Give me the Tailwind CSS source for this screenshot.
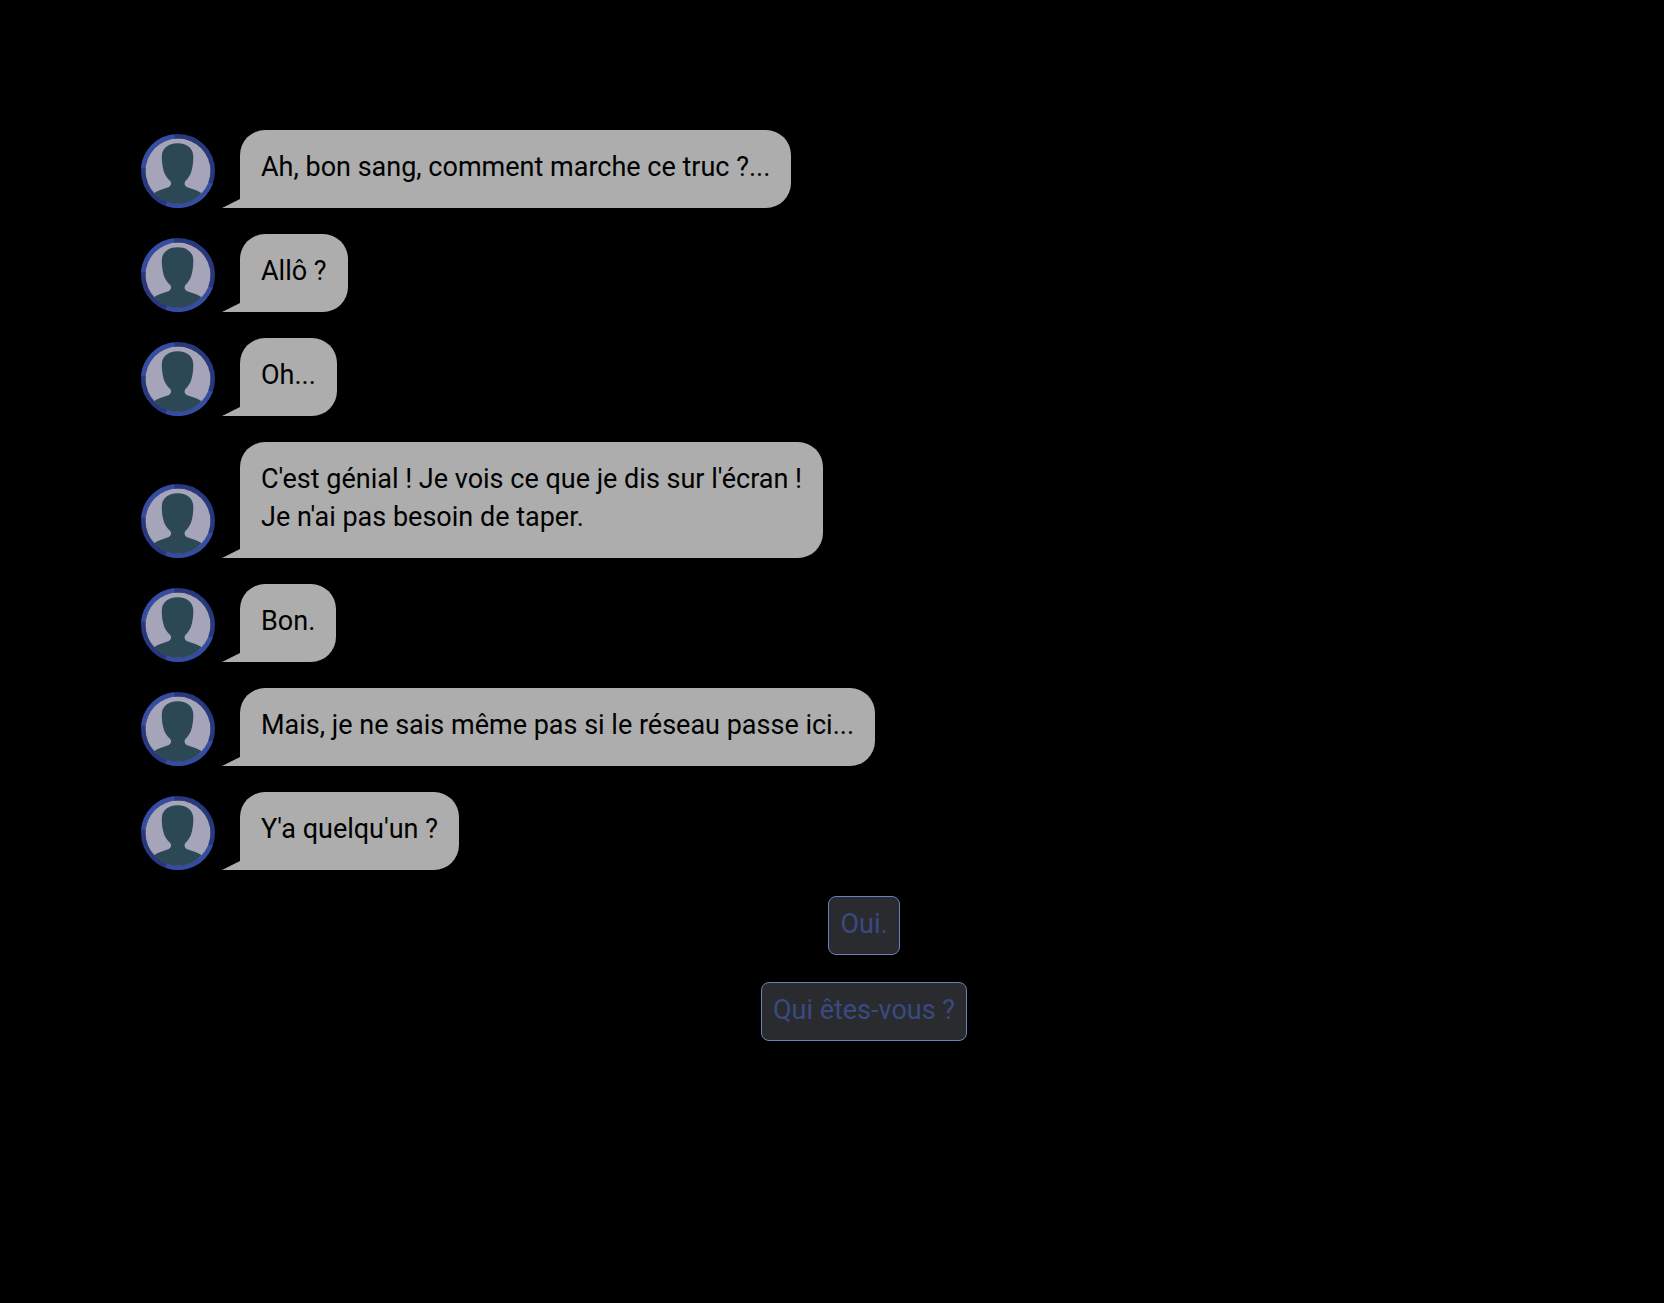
<!DOCTYPE html>
<html lang="fr">
<head>
    <meta charset="UTF-8">
    <meta name="viewport" content="width=device-width, initial-scale=1.0">
    <title>Conversation</title>
    <script src="https://cdn.jsdelivr.net/npm/@tailwindcss/browser@4"></script>
</head>
<body class="min-h-screen bg-black text-black text-[27px] leading-[38px] font-[Roboto,sans-serif]">

    <!-- Shared drawings -->
    <svg class="hidden" aria-hidden="true">
        <symbol id="avatar" viewBox="0 0 74 74">
            <circle cx="37" cy="37" r="34.7" fill="none" stroke="#27387f" stroke-width="4.6"/>
            <path d="M2.4 34A34.7 34.7 0 0 1 33.4 2.5M69.6 48.9A34.7 34.7 0 0 1 25.1 69.6" fill="none" stroke="#354ca3" stroke-width="4.6"/>
            <circle cx="37" cy="37" r="32.5" fill="#a5a4b8"/>
            <path d="M36.600 9.300C46.500 9.300 52.300 14.800 52.300 22.500C52.300 28 51.800 32.500 50.500 37C49.300 41.300 47.200 44.300 44.300 47C43.100 49 43.300 51.500 45.800 53C51.300 55.300 56.300 56 60.700 59.200A32.500 32.500 0 0 1 12.900 59.200C17.300 56 22.300 55.300 27.800 53C30.300 51.500 30.500 49 29.300 47C26.200 44.300 23.900 41.300 22.700 37C21.400 32.500 20.800 28 20.800 22.500C20.800 14.800 26.700 9.300 36.600 9.300Z" fill="#2c4855"/>
        </symbol>
        <symbol id="tail" viewBox="0 0 18 9">
            <path d="M18 0V9H0Z" fill="#adadad"/>
        </symbol>
    </svg>

    <main class="flex flex-col gap-[26px] pt-[130px] pr-[77px] pb-16 pl-[141px]">
        <ul id="messages" class="flex flex-col gap-[26px]"></ul>

        <!-- Possible answers -->
        <div id="choices" class="flex flex-col items-center gap-[27px]">
            <button type="button" class="rounded-lg border border-[#6a80bb] bg-[#2a2b2e] px-[11px] pt-2 pb-[11px] text-[#3a4a80] cursor-pointer">Oui.</button>
            <button type="button" class="rounded-lg border border-[#6a80bb] bg-[#2a2b2e] px-[11px] pt-2 pb-[11px] text-[#3a4a80] cursor-pointer">Qui êtes-vous ?</button>
        </div>
    </main>

<script>
    const messages = [
        "Ah, bon sang, comment marche ce truc ?...",
        "Allô ?",
        "Oh...",
        "C'est génial ! Je vois ce que je dis sur l'écran !<br>Je n'ai pas besoin de taper.",
        "Bon.",
        "Mais, je ne sais même pas si le réseau passe ici...",
        "Y'a quelqu'un ?"
    ];

    const list = document.getElementById("messages");

    messages.forEach(text => {
        const row = document.createElement("li");
        row.className = "flex items-end";
        row.innerHTML = `
            <svg class="size-[74px] shrink-0" role="img" aria-label="Inconnu"><use href="#avatar"/></svg>
            <svg class="ml-[7px] h-[9px] w-[18px] shrink-0" aria-hidden="true"><use href="#tail"/></svg>
            <p class="rounded-[25px] rounded-bl-none bg-[#adadad] px-[21px] pt-[18px] pb-[22px]">${text}</p>
        `;
        list.appendChild(row);
    });
</script>

</body>
</html>
